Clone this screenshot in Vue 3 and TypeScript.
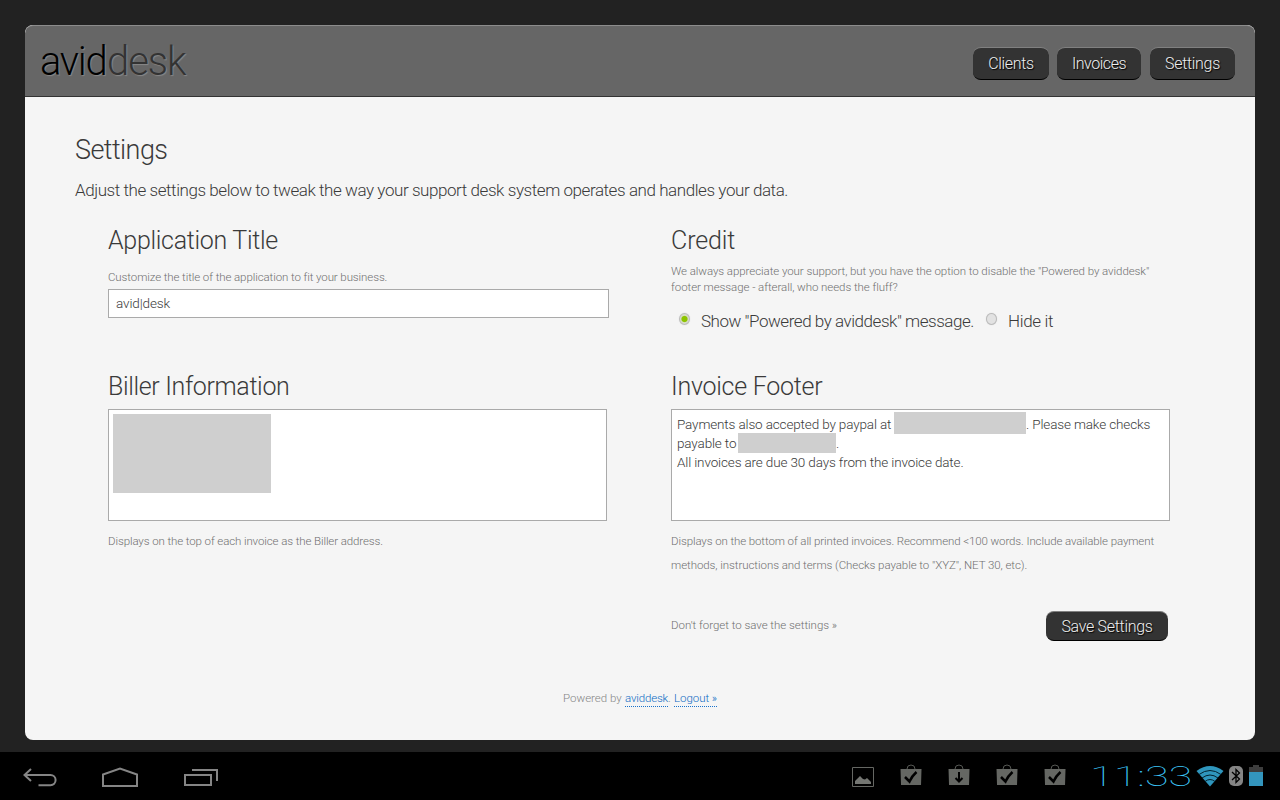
<script setup lang="ts">
import { ref } from 'vue'

interface NavItem { label: string; id: string }
const nav: NavItem[] = [
  { label: 'Clients', id: 'clients' },
  { label: 'Invoices', id: 'invoices' },
  { label: 'Settings', id: 'settings' },
]
const credit = ref<'show' | 'hide'>('show')
const bags: Array<'check' | 'down'> = ['check', 'down', 'check', 'check']
</script>

<template>
  <div class="screen">
    <div class="stage">
      <div class="card">
        <header class="top">
          <div class="logo"><span class="logo-a">avid</span><span class="logo-b">desk</span></div>
          <nav class="nav">
            <button v-for="n in nav" :key="n.id" class="btn" :class="n.id">{{ n.label }}</button>
          </nav>
        </header>
        <main class="content">
          <h1>Settings</h1>
          <p class="intro">Adjust the settings below to tweak the way your support desk system operates and handles your data.</p>
          <div class="grid">
            <section class="cell first">
              <h2 class="h-app">Application Title</h2>
              <p class="hint customize">Customize the title of the application to fit your business.</p>
              <div class="input">avid|desk</div>
            </section>
            <section class="cell first">
              <h2 class="h-credit">Credit</h2>
              <p class="hint credit-hint">We always appreciate your support, but you have the option to disable the "Powered by aviddesk"<br>footer message - afterall, who needs the fluff?</p>
              <div class="radios">
                <label @click="credit = 'show'"><i class="radio" :class="{ on: credit === 'show' }"></i><span class="show-label">Show "Powered by aviddesk" message.</span></label>
                <label @click="credit = 'hide'"><i class="radio" :class="{ on: credit === 'hide' }"></i><span class="hide-label">Hide it</span></label>
              </div>
            </section>
            <section class="cell">
              <h2 class="h-biller">Biller Information</h2>
              <div class="area biller"><div class="redacted address"></div></div>
              <p class="hint below">Displays on the top of each invoice as the Biller address.</p>
            </section>
            <section class="cell">
              <h2 class="h-footer">Invoice Footer</h2>
              <div class="area footer-text">
                <div class="line"><span class="seg-a">Payments also accepted by paypal at</span><i class="redacted email"></i><span>. Please make checks</span></div>
                <div class="line"><span class="seg-b">payable to</span><i class="redacted payee"></i><span>.</span></div>
                <div class="line">All invoices are due 30 days from the invoice date.</div>
              </div>
              <p class="hint below">Displays on the bottom of all printed invoices. Recommend &lt;100 words. Include available payment<br><span class="terms">methods, instructions and terms (Checks payable to "XYZ", NET 30, etc).</span></p>
              <div class="save-row">
                <span class="hint reminder">Don't forget to save the settings »</span>
                <button class="btn save">Save Settings</button>
              </div>
            </section>
          </div>
          <footer class="powered"><span class="by">Powered by</span><a class="a-desk">aviddesk</a><span class="dot">.</span><a class="a-out">Logout »</a></footer>
        </main>
      </div>
    </div>

    <div class="sysbar">
      <div class="keys">
        <svg class="back" width="36" height="20" viewBox="0 0 36 20"><path d="M8 1 1.500 7 8 13M2 7H27.500a5 5 0 0 1 0 10.200H15.500" /></svg>
        <svg class="home" width="38" height="21" viewBox="0 0 38 21"><path d="M2 19V7.500L19 1.500 36 7.500V19Z" /></svg>
        <svg class="recent" width="36" height="19" viewBox="0 0 36 19"><path d="M2 7H28V17H2ZM9 2H34V13" /></svg>
      </div>
      <div class="status">
        <svg class="picture" width="22" height="20" viewBox="0 0 22 20"><path d="M.500 .500H21.500V19.500H.500Z" fill="none" stroke="#656763" /><path d="M3 17V14L8 9 11 12 13 12.500 15 11 19 15V17Z" fill="#747672" /></svg>
        <svg v-for="(b, i) in bags" :key="i" class="bag" width="22" height="22" viewBox="0 0 22 22">
          <path d="M7 6V5a4 4 0 0 1 8 0V6" fill="none" stroke="#555753" />
          <path d="M.500 5H21.500L21 21H1Z" fill="#656763" />
          <path v-if="b === 'check'" d="M5 13 9.500 17.500Q12 12 16.500 8" class="mark" />
          <path v-else d="M11 8V17M7.500 14 11 17.500 14.500 14" class="mark thin" />
        </svg>
        <div class="clock"><span>11:33</span></div>
        <svg class="wifi" width="28" height="22" viewBox="0 0 28 22">
          <path d="M.500 6Q14-4 27.500 6L14 21.500Z" fill="#2f96bd" />
          <path d="M3 9.500Q14 1.500 25 9.500M6 13Q14 7 22 13M9 16.500Q14 12.500 19 16.500" fill="none" stroke="#03222f" stroke-width="1" />
        </svg>
        <svg class="bt" width="14" height="20" viewBox="0 0 14 20"><rect width="14" height="20" rx="5" fill="#858585" /><path d="M3 6 10.500 13 7 16.500V3.500L10.500 7 3 14" fill="none" stroke="#000" stroke-width="1.300" /></svg>
        <svg class="battery" width="14" height="21" viewBox="0 0 14 21"><path d="M4 0H10V2H14V8H0V2H4Z" fill="#3d3d3d" /><path d="M0 7H14V21H0Z" fill="#3395bd" /></svg>
      </div>
    </div>
  </div>
</template>

<style>
body { margin: 0; background: #222; }
</style>
<style scoped>
* { box-sizing: border-box; }
.screen { width: 1280px; height: 800px; display: flex; flex-direction: column; overflow: hidden; background: #222; font-family: Roboto, "Liberation Sans", sans-serif; font-weight: 300; color: #3a3a3a; white-space: nowrap; }
.stage { height: 752px; padding: 25px 25px 12px; }
.card { height: 715px; border-radius: 8px; background: #f5f5f5; overflow: hidden; }
.top { height: 72px; display: flex; justify-content: space-between; align-items: flex-start; padding: 0 20px 0 15px; background: #666; border-top: 1px solid #8c8c8c; border-bottom: 1px solid #333; border-radius: 8px 8px 0 0; }
.logo { display: flex; padding-top: 12px; font-size: 40px; line-height: 48px; text-shadow: 1px 1px 1px #888; }
.logo-a { width: 67px; color: #000; letter-spacing: -1.3px; }
.logo-b { color: #333; letter-spacing: -1.1px; }
.nav { display: flex; padding-top: 21px; }
.btn { display: block; height: 33px; margin: 0; padding: 0; border: 0; border-top: 1px solid #808080; border-bottom: 1px solid #000; border-radius: 8px; background: #333; color: #eee; font-family: inherit; font-weight: 300; font-size: 16px; line-height: 32px; text-align: center; letter-spacing: -0.31px; text-shadow: 1px 1px 1px #000; }
.clients { width: 76px; margin-right: 8px; }
.invoices { width: 84px; margin-right: 9px; letter-spacing: -0.45px; }
.settings { width: 85px; }
.content { padding: 35px 50px 0; }
h1, h2, p { margin: 0; font-weight: 300; }
h1 { font-size: 27px; line-height: 36px; letter-spacing: -0.56px; }
.intro { margin-top: 10px; font-size: 17px; line-height: 24px; letter-spacing: -0.432px; }
.grid { display: grid; grid-template-columns: 501px 499px; column-gap: 62px; margin-top: 22px; padding-left: 33px; }
.first { height: 146px; }
h2 { height: 32px; font-size: 25px; line-height: 34px; letter-spacing: -0.3px; }
.h-credit { letter-spacing: -0.1px; }
.h-biller { letter-spacing: -0.35px; }
.h-footer { letter-spacing: -0.26px; }
.hint { font-size: 11.5px; line-height: 16px; color: #707070; letter-spacing: -0.095px; }
.customize { margin-top: 13px; }
.input { width: 501px; height: 29px; margin-top: 4px; padding-left: 7px; border: 1px solid #aaa; background: #fff; font-size: 13.5px; line-height: 26px; letter-spacing: -0.12px; }
.credit-hint { margin-top: 7px; letter-spacing: -0.065px; }
.radios { display: flex; margin-top: 14px; padding-left: 8px; font-size: 17px; line-height: 24px; }
.radios label { display: flex; }
.radio { width: 11px; height: 12px; margin: 4px 11px 0 0; border: 1px solid #bbb; border-radius: 50%; background: #e2e2e2; box-shadow: 0 0 1px #ccc; }
.radio.on { background: radial-gradient(circle, #8dc400 0 2.6px, #d8ddc8 3.6px); }
.show-label { width: 285px; letter-spacing: -0.46px; }
.hide-label { letter-spacing: -0.34px; }
.area { width: 499px; height: 112px; border: 1px solid #aaa; background: #fff; margin-top: 7px; }
.biller { padding: 4px 0 0 4px; }
.redacted { display: block; flex: none; background: #cfcfcf; }
.address { width: 158px; height: 79px; }
.footer-text { padding: 5px 0 0 5px; font-size: 13.5px; letter-spacing: -0.14px; line-height: 19px; }
.line { display: flex; height: 19px; }
.seg-a { width: 217px; }
.email { width: 132px; height: 22px; margin-top: -3px; }
.seg-b { width: 61px; }
.payee { width: 98px; height: 20px; margin-top: -1px; }
.below { margin-top: 8px; line-height: 24px; letter-spacing: -0.105px; }
.terms { letter-spacing: -0.065px; }
.save-row { display: flex; justify-content: space-between; align-items: flex-start; margin-top: 34px; padding-right: 2px; }
.reminder { line-height: 28px; letter-spacing: -0.03px; }
.save { width: 122px; height: 30px; line-height: 29px; }
.powered { display: flex; justify-content: center; margin-top: 49px; font-size: 11.5px; line-height: 16px; color: #858585; }
.by { width: 62px; }
.powered a { height: 17px; border-bottom: 1px dotted #1a73cc; color: #0f6cc4; }
.a-desk { width: 43px; letter-spacing: -0.17px; }
.dot { width: 6px; }
.a-out { width: 43px; letter-spacing: -0.05px; }
.sysbar { height: 48px; display: flex; justify-content: space-between; background: #000; }
.keys { display: flex; padding-left: 23px; }
.keys path { fill: none; stroke: #858585; stroke-width: 2; }
.back { margin-top: 16px; }
.home { margin: 15px 0 0 42px; }
.recent { margin: 16px 0 0 44px; }
.status { display: flex; padding-right: 17px; }
.picture { margin: 15px 26px 0 0; }
.bag { margin: 12px 26px 0 0; }
.mark { fill: none; stroke: #000; stroke-width: 2.5; }
.thin { stroke-width: 2; }
.clock { width: 104px; height: 48px; font-size: 27px; font-weight: 100; line-height: 50px; color: #3cc6f8; }
.clock span { display: inline-block; margin-left: -2px; transform: scaleX(1.6); transform-origin: 0 50%; }
.wifi { margin-top: 13px; }
.bt { margin: 14px 0 0 5px; }
.battery { margin: 13px 0 0 6px; }
</style>
